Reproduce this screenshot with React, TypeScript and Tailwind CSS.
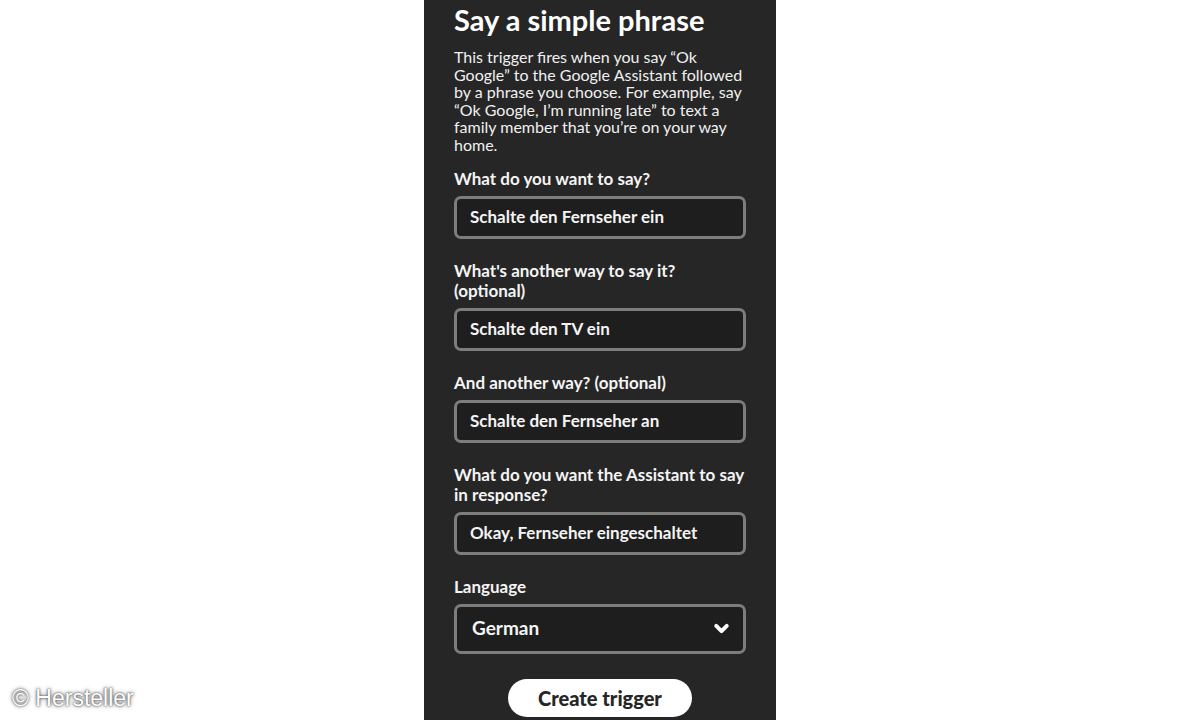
import { ChevronDown } from 'lucide-react'

// ─── Types ────────────────────────────────────────────────────────────────────

interface FieldProps {
  label: string[]
  value: string
}

const font = { fontFamily: 'Lato, "Open Sans", sans-serif' }

// ─── Sub-components ───────────────────────────────────────────────────────────

function Field({ label, value }: FieldProps) {
  return (
    <div className="mt-[22px] flex flex-col">
      <p className="text-[17px] leading-[20px] font-bold text-[#f4f4f4]" style={font}>
        {label.map((line) => (
          <span key={line} className="block">
            {line}
          </span>
        ))}
      </p>
      <div className="mt-[7px] h-[43px] rounded-[7px] border-[3px] border-[#7d7d7d] bg-[#1e1e1e] flex items-center px-[13px]">
        <span className="text-[17px] font-bold text-[#f4f4f4]" style={font}>
          {value}
        </span>
      </div>
    </div>
  )
}

// ─── App ──────────────────────────────────────────────────────────────────────

export default function App() {
  return (
    <div className="relative w-[1200px] h-[720px] bg-white overflow-hidden">
      <div className="mx-auto w-[352px] h-full bg-[#262626] px-[30px] flex flex-col">
        <h1 className="pt-[4px] text-[29px] leading-[32px] font-bold text-white" style={font}>
          Say a simple phrase
        </h1>
        <p className="mt-[12px] text-[16px] leading-[17.6px] text-[#f0f0f0]" style={font}>
          This trigger fires when you say “Ok Google” to the Google Assistant followed by a phrase
          you choose. For example, say “Ok Google, I’m running late” to text a family member that
          you’re on your way home.
        </p>

        <div className="-mt-[7px]">
          <Field label={['What do you want to say?']} value="Schalte den Fernseher ein" />
        </div>
        <Field label={["What's another way to say it?", '(optional)']} value="Schalte den TV ein" />
        <Field label={['And another way? (optional)']} value="Schalte den Fernseher an" />
        <Field
          label={['What do you want the Assistant to say', 'in response?']}
          value="Okay, Fernseher eingeschaltet"
        />

        <div className="mt-[22px] flex flex-col">
          <p className="text-[17px] leading-[20px] font-bold text-[#f4f4f4]" style={font}>
            Language
          </p>
          <div className="mt-[7px] h-[50px] rounded-[7px] border-[3px] border-[#7d7d7d] bg-[#1e1e1e] flex items-center justify-between pl-[15px] pr-[11px]">
            <span className="text-[19px] font-bold text-[#f4f4f4]" style={font}>
              German
            </span>
            <ChevronDown className="w-[21px] h-[21px] text-white" strokeWidth={4.5} />
          </div>
        </div>

        <button
          className="mt-[25px] self-center w-[184px] h-[38px] rounded-full bg-white text-[20px] font-black text-[#262626]"
          style={font}
        >
          Create trigger
        </button>
      </div>

      <span
        className="absolute left-[12px] top-[685px] text-[23px] leading-[26px] text-white [text-shadow:0_0_2px_#333,0_0_4px_#666]"
        style={{ fontFamily: '"Liberation Sans", Arial, sans-serif' }}
      >
        © Hersteller
      </span>
    </div>
  )
}
